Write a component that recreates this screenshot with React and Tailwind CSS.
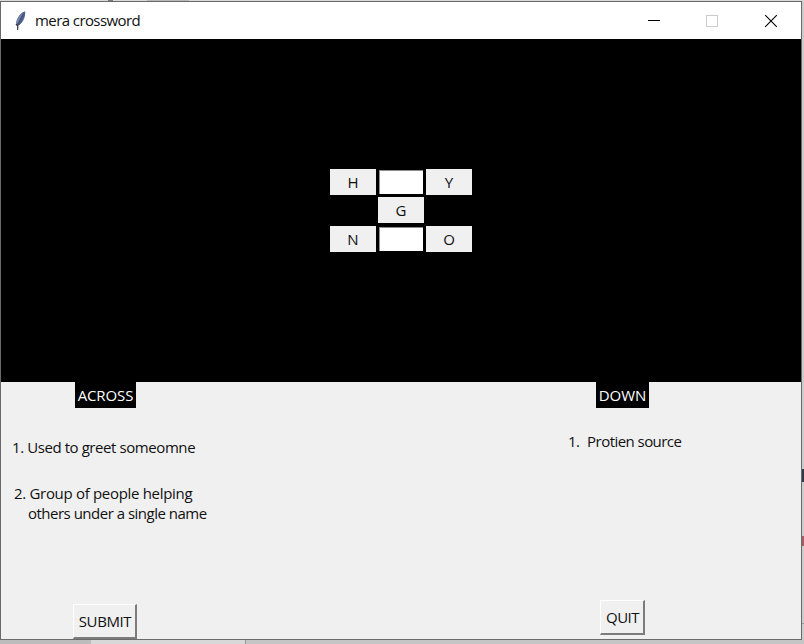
const label = "whitespace-pre text-[15px] leading-[20px]";

function Cell({ children }) {
  return (
    <div className="flex h-[26px] w-[46px] items-center justify-center bg-[#f0f0f0] pb-px text-[15px] leading-[20px]">
      {children}
    </div>
  );
}

function Entry() {
  return (
    <input
      aria-label="letter"
      className="m-px h-[24px] w-[44px] rounded-none border-t border-l border-[#8c8c8c] bg-white outline-none"
    />
  );
}

function Feather() {
  return (
    <svg className="ml-[12px] h-[22px] w-[15px]" viewBox="0 0 15 22">
      <path d="M11.8 1.6C8 2.4 4.2 7.2 3 12.8L4.6 15.6C8.8 14 12 8 11.8 1.6Z" fill="#4f628f" />
      <path d="M10.2 2.8C7 5 4.5 8.5 3.4 13L4.8 13.5C6.5 9.5 8.3 6 10.2 2.8Z" fill="#7c8cab" />
      <path d="M11.8 1.6C12 8 8.8 14 4.6 15.6M10.8 3.5C8.5 7 6.5 10.5 4.8 15" fill="none" stroke="#35426a" strokeWidth=".7" />
      <path d="M3 14L4.8 16L4.6 20" fill="none" stroke="#33353c" strokeWidth="1.2" />
    </svg>
  );
}

function TitleBar() {
  return (
    <header className="flex h-[37px] items-center bg-white">
      <Feather />
      <h1 className="ml-[7px] grow pb-[2px] text-[15px] leading-[20px] tracking-[-0.58px]">mera crossword</h1>
      <div className="flex w-[182px] items-center">
        <svg className="ml-[28px] h-[14px] w-[14px]" viewBox="0 0 14 14" shapeRendering="crispEdges">
          <path d="M1 6.5H13" stroke="#000" />
        </svg>
        <svg className="ml-[44px] h-[14px] w-[14px]" viewBox="0 0 14 14" shapeRendering="crispEdges">
          <path d="M1.5 1.5H12.5V12.5H1.5Z" fill="none" stroke="#cbcbcb" />
        </svg>
        <svg className="ml-[45px] h-[14px] w-[14px]" viewBox="0 0 14 14">
          <path d="M1.2 1.2L12.8 12.8M12.8 1.2L1.2 12.8" stroke="#000" strokeWidth="1.1" />
        </svg>
      </div>
    </header>
  );
}

const button =
  "flex items-center justify-center border-t border-l border-r-2 border-b-2 border-t-white border-l-white border-r-[#7c7c7c] border-b-[#7c7c7c] bg-[#f0f0f0] pb-px pl-px text-[15px] leading-[20px]";

export default function App() {
  return (
    <div className="flex h-[644px] w-[804px] flex-col overflow-hidden bg-[#d2d2d2] font-['Open_Sans','Noto_Sans',sans-serif] text-[#111]">
      <div className="flex h-px shrink-0 bg-[#d9d9d9]">
        <div className="ml-[108px] h-px w-[5px] bg-[#777]" />
        <div className="ml-[34px] h-px w-[42px] bg-[#b8b8b8]" />
      </div>
      <div className="flex h-[639px] shrink-0">
        <div className="flex w-[802px] flex-col border border-[#6a6a6a] bg-[#f0f0f0]">
          <TitleBar />
          <section className="h-[343px] bg-black pt-[130px] pl-[329px]">
            <div className="grid grid-cols-[46px_46px_46px] gap-x-[2px]">
              <Cell>H</Cell>
              <Entry />
              <Cell>Y</Cell>
              <div className="col-start-2 mt-[2px] mb-[3px]">
                <Cell>G</Cell>
              </div>
              <div className="col-start-1">
                <Cell>N</Cell>
              </div>
              <Entry />
              <Cell>O</Cell>
            </div>
          </section>
          <section className="flex h-[257px] justify-between">
            <div className="w-[260px]">
              <h2 className="ml-[74px] h-[26px] w-[61px] bg-black pt-[3px] text-center text-[15px] leading-[20px] tracking-[-0.1px] text-white">ACROSS</h2>
              <p className={`${label} mt-[29px] ml-[11px] tracking-[-0.42px]`}>1. Used to greet someomne</p>
              <p className={`${label} mt-[26px] ml-[13px] tracking-[-0.31px]`}>2. Group of people helping</p>
              <p className={`${label} ml-[27px] tracking-[-0.5px]`}>others under a single name</p>
              <button className={`${button} mt-[81px] ml-[72px] h-[35px] w-[64px] tracking-[-0.4px]`}>SUBMIT</button>
            </div>
            <div className="w-[240px]">
              <h2 className="ml-[35px] h-[26px] w-[53px] bg-black pt-[3px] text-center text-[15px] leading-[20px] text-white">DOWN</h2>
              <p className={`${label} mt-[23px] ml-[7px] tracking-[-0.55px]`}>{"1. "}<span className="ml-[1px]"> Protien source</span></p>
              <button className={`${button} mt-[149px] ml-[39px] h-[35px] w-[45px] tracking-[-0.5px]`}>QUIT</button>
            </div>
          </section>
        </div>
        <div className="flex w-[2px] flex-col bg-[#cccccc]">
          <div className="mt-[468px] h-[13px] w-[2px] bg-[#333b4b]" />
          <div className="mt-[54px] h-[10px] w-[2px] bg-[#a65e64]" />
          <div className="mt-[77px] h-px w-[2px] bg-[#999]" />
        </div>
      </div>
      <div className="flex h-[4px] shrink-0 bg-[#c5c5c5]">
        <div className="w-[91px] bg-[#bcbcbc]" />
        <div className="w-[155px] border-r border-[#999] bg-[#d8d8d8]" />
      </div>
    </div>
  );
}
